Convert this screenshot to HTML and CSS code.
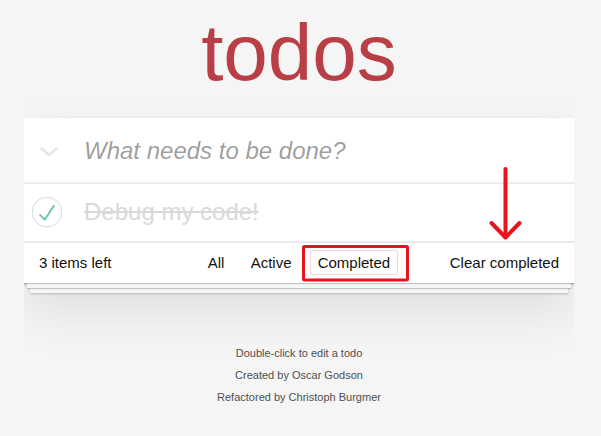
FILE: index.html
```html
<!DOCTYPE html>
<html lang="en">
<head>
<meta charset="utf-8">
<title>todos</title>
<link rel="stylesheet" href="styles.css">
</head>
<body>
<h1 class="title">todos</h1>
<section class="todoapp">
  <header class="header">
    <label class="toggle-all" aria-label="Mark all as complete">
      <svg width="18" height="10" viewBox="0 0 18 10"><polyline points="1.5,1.5 9,8 16.5,1.5" fill="none" stroke="#e6e6e6" stroke-width="2.4" stroke-linecap="round" stroke-linejoin="round"/></svg>
    </label>
    <input class="new-todo" placeholder="What needs to be done?">
  </header>
  <ul class="todo-list">
    <li class="todo completed">
      <span class="toggle">
        <svg width="40" height="40" viewBox="-10 -18 100 135"><circle cx="50" cy="50" r="50" fill="none" stroke="#bddad5" stroke-width="3"/><path fill="#5dc2af" d="M72 25L42 71 27 56l-4 4 20 20 34-52z"/></svg>
      </span>
      <label class="todo-label">Debug my code!</label>
    </li>
  </ul>
  <footer class="footer">
    <span class="todo-count">3 items left</span>
    <ul class="filters">
      <li><a class="filter" href="#/">All</a></li>
      <li><a class="filter" href="#/active">Active</a></li>
      <li><a class="filter selected" href="#/completed">Completed</a></li>
    </ul>
    <span class="clear-completed">Clear completed</span>
  </footer>
</section>
<footer class="info">
  <p>Double-click to edit a todo</p>
  <p>Created by Oscar Godson</p>
  <p>Refactored by Christoph Burgmer</p>
</footer>
<svg class="annotations" width="601" height="436" viewBox="0 0 601 436">
  <rect x="303.5" y="246.5" width="104" height="33.5" rx="1" fill="none" stroke="#e8141e" stroke-width="3"/>
  <g fill="none" stroke="#e8141e" stroke-width="4" stroke-linecap="round" stroke-linejoin="round">
    <line x1="505.5" y1="169" x2="505.5" y2="237"/>
    <polyline points="491.5,223 505.5,237.5 519.5,223"/>
  </g>
</svg>
</body>
</html>
```

FILE: styles.css
```css
html {
  margin: 0;
  padding: 0 3px 0 0;
}

body {
  font: 14px "Liberation Sans", Arial, sans-serif;
  line-height: 1.4em;
  background: #f5f5f5;
  color: #111;
  min-width: 230px;
  max-width: 550px;
  margin: 0 auto;
  padding: 0;
}

.title {
  margin: 0;
  padding-top: 13px;
  height: 80px;
  font-size: 80px;
  line-height: 80px;
  font-weight: 400;
  text-align: center;
  color: #b83f45;
  margin-bottom: 25px;
}

.todoapp {
  background: #fff;
  margin: 0 0 40px 0;
  box-shadow: 0 2px 4px 0 rgba(0, 0, 0, 0.2), 0 25px 50px 0 rgba(0, 0, 0, 0.1);
}

.header {
  display: flex;
  height: 65px;
  box-shadow: inset 0 -2px 1px rgba(0, 0, 0, 0.03);
}

.toggle-all {
  width: 60px;
  flex: none;
  display: flex;
  align-items: center;
  justify-content: center;
  padding-top: 2px;
  padding-right: 11px;
  box-sizing: border-box;
}

.new-todo {
  flex: 1;
  min-width: 0;
  margin: 0;
  height: 65px;
  padding: 16px 16px 16px 0;
  border: none;
  outline: none;
  background: transparent;
  font-family: inherit;
  font-size: 24px;
  line-height: 1.4em;
  color: inherit;
  box-sizing: border-box;
}

.new-todo::placeholder {
  font-style: italic;
  font-weight: 400;
  color: rgba(0, 0, 0, 0.4);
}

.todo-list {
  margin: 0;
  padding: 0;
  list-style: none;
  border-top: 1px solid #e6e6e6;
}

.todo {
  display: flex;
  align-items: center;
  font-size: 24px;
  border-bottom: 1px solid #ededed;
}

.toggle {
  width: 40px;
  height: 40px;
  flex: none;
  display: block;
}

.toggle svg {
  display: block;
}

.todo-label {
  display: block;
  padding: 14px 15px 14px 20px;
  line-height: 1.2;
  font-weight: 400;
  color: #4d4d4d;
}

.completed .todo-label {
  color: #d9d9d9;
  text-decoration: line-through;
}

.footer {
  display: grid;
  grid-template-columns: 1fr auto 1fr;
  align-items: start;
  padding: 10px 15px;
  height: 20px;
  font-size: 15px;
  border-top: 1px solid #e6e6e6;
  box-shadow: 0 1px 1px rgba(0, 0, 0, 0.2),
    0 8px 0 -3px #f6f6f6,
    0 9px 1px -3px rgba(0, 0, 0, 0.2),
    0 16px 0 -6px #f6f6f6,
    0 17px 2px -6px rgba(0, 0, 0, 0.2);
}

.todo-count {
  justify-self: start;
}

.filters {
  margin: 0;
  padding: 0;
  list-style: none;
  white-space: nowrap;
}

.filters li {
  display: inline;
}

.filter {
  color: inherit;
  margin: 3px;
  padding: 3px 7px;
  text-decoration: none;
  border: 1px solid transparent;
  border-radius: 3px;
}

.filter.selected {
  border-color: rgba(175, 47, 47, 0.2);
}

.clear-completed {
  justify-self: end;
}

.info {
  margin: 65px auto 0;
  color: #4d4d4d;
  font-size: 11px;
  text-shadow: 0 1px 0 rgba(255, 255, 255, 0.5);
  text-align: center;
}

.info p {
  line-height: 1;
  margin: 11px 0;
}

.annotations {
  position: absolute;
  top: 0;
  left: 0;
  pointer-events: none;
}
```
